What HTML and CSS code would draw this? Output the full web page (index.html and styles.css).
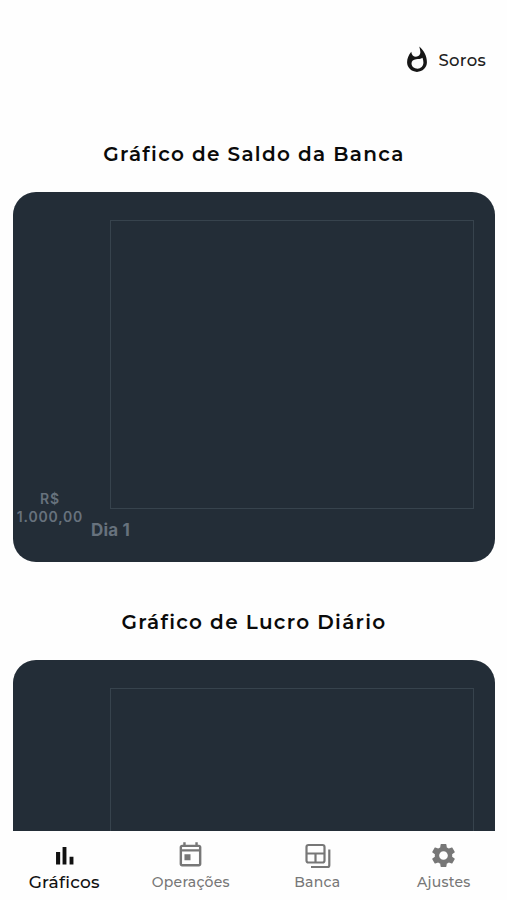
FILE: index.html
```html
<!DOCTYPE html>
<html lang="pt-BR">
<head>
    <meta charset="UTF-8">
    <meta name="viewport" content="width=device-width, initial-scale=1.0">
    <title>Gráficos</title>
    <link rel="stylesheet" href="styles.css">
</head>
<body>
    <main class="content">
        <header class="topbar">
            <button type="button" class="soros">
                <svg class="soros-icon" viewBox="0 0 24 24"><path fill-rule="evenodd" d="M13.9.4s1 2.9 1 5c0 2.1-1.6 3.8-3.8 3.8-2.1 0-3.9-1.7-4-4.3C4.700 7.700 3.500 10.800 3.500 14c0 4.500 3.800 8.200 8.500 8.200s8.500-3.700 8.500-8.200C20.500 8.600 17.900 3.700 13.900.4zM16.700 10c.5 1.500.8 2.900.8 4.200 0 3.100-2.200 5.200-5 5.200-2.900 0-5.200-1.900-5.200-4.400 0-2.200 1.600-3.400 3.900-3.700 2.100-.3 4-.1 5.500-1.300z"/></svg>
                <span class="soros-label">Soros</span>
            </button>
        </header>

        <h2 class="title">Gráfico de Saldo da Banca</h2>
        <section class="chart">
            <div class="y-axis"><span>R$</span><span>1.000,00</span></div>
            <div class="plot"></div>
            <div class="x-axis"><span>Dia 1</span></div>
        </section>

        <h2 class="title">Gráfico de Lucro Diário</h2>
        <section class="chart">
            <div class="y-axis"></div>
            <div class="plot"></div>
            <div class="x-axis"></div>
        </section>
    </main>

    <nav class="tabs">
        <a class="tab active">
            <svg viewBox="0 0 24 24"><path d="M5 9.2h3.400V19.400H5zM10.400 5h3.200v14.400h-3.200zM16.200 13h3.200v6.400h-3.200z"/></svg>
            <span>Gráficos</span>
        </a>
        <a class="tab">
            <svg viewBox="0 0 24 24"><path d="M19 3h-1V1h-2v2H8V1H6v2H5c-1.11 0-1.99.9-1.99 2L3 19c0 1.1.89 2 2 2h14c1.1 0 2-.9 2-2V5c0-1.1-.9-2-2-2zm0 16H5V8.6h14V19zM5 6.8V5h14v1.8H5zM7 11h5v5H7z"/></svg>
            <span>Operações</span>
        </a>
        <a class="tab">
            <svg class="outline" viewBox="0 0 29 29"><rect x="3.5" y="4" width="18" height="17.500" rx="2"/><path d="M3.5 12.5h18M12.500 12.5V21.500M26.300 8.500v15.7q0 1.800-1.800 1.800H8"/></svg>
            <span>Banca</span>
        </a>
        <a class="tab">
            <svg viewBox="0 0 24 24"><path d="M19.14 12.94c.04-.3.06-.61.06-.94 0-.32-.02-.64-.07-.94l2.03-1.58c.18-.14.23-.41.12-.61l-1.92-3.32c-.12-.22-.37-.29-.59-.22l-2.39.96c-.5-.38-1.03-.7-1.62-.94l-.36-2.54c-.04-.24-.24-.41-.48-.41h-3.84c-.24 0-.43.17-.47.41l-.36 2.54c-.59.24-1.13.57-1.62.94l-2.39-.96c-.22-.08-.47 0-.59.22L2.74 8.87c-.12.21-.08.47.12.61l2.03 1.58c-.05.3-.09.63-.09.94s.02.64.07.94l-2.03 1.58c-.18.14-.23.41-.12.61l1.92 3.32c.12.22.37.29.59.22l2.39-.96c.5.38 1.03.7 1.62.94l.36 2.54c.05.24.24.41.48.41h3.84c.24 0 .44-.17.47-.41l.36-2.54c.59-.24 1.13-.56 1.62-.94l2.39.96c.22.08.47 0 .59-.22l1.92-3.32c.12-.22.07-.47-.12-.61l-2.01-1.58zM12 15.6c-1.98 0-3.6-1.62-3.6-3.6s1.62-3.6 3.6-3.6 3.6 1.62 3.6 3.6-1.62 3.6-3.6 3.6z"/></svg>
            <span>Ajustes</span>
        </a>
    </nav>
</body>
</html>
```

FILE: styles.css
```css
* {
    box-sizing: border-box;
}
body {
    margin: 0;
    height: 100vh;
    display: flex;
    flex-direction: column;
    overflow: hidden;
    background: #fefefe;
    font-family: 'Montserrat', 'Inter', sans-serif;
}
.content {
    flex: 1;
    min-height: 0;
    overflow: hidden;
    padding: 0 12px 0 13px;
}
.topbar {
    height: 117px;
    padding: 43px 9px 0 0;
    display: flex;
    justify-content: flex-end;
    align-items: flex-start;
}
.soros {
    display: flex;
    align-items: center;
    gap: 7px;
    height: 34px;
    padding: 0;
    border: none;
    background: none;
    color: #202020;
    font-family: inherit;
    font-size: 16.5px;
    font-weight: 500;
    white-space: nowrap;
}
.soros-icon {
    width: 28px;
    height: 28px;
    fill: #161616;
}
.soros-label {
    letter-spacing: 0.3px;
}
.title {
    height: 75px;
    margin: 0;
    color: #0a0a0a;
    font-size: 20px;
    font-weight: 600;
    line-height: 75px;
    letter-spacing: 1.3px;
    text-align: center;
    white-space: nowrap;
}
.chart {
    height: 370px;
    margin-bottom: 23px;
    padding: 28px 21px 0 0;
    display: grid;
    grid-template-columns: 97px 1fr;
    grid-template-rows: 289px 1fr;
    border-radius: 23px;
    background: #232d37;
    color: #67727d;
    font-family: 'Inter', sans-serif;
    font-weight: 700;
}
.y-axis {
    display: flex;
    flex-direction: column;
    justify-content: flex-end;
    align-items: center;
    padding-right: 23px;
    margin-bottom: -17px;
    font-size: 14px;
    font-weight: 600;
    line-height: 18px;
    white-space: nowrap;
    letter-spacing: 0.8px;
}
.plot {
    border: 1px solid #37434d;
}
.x-axis {
    grid-column: 1 / 3;
    padding: 11px 0 0 78px;
    font-size: 17px;
    line-height: 20px;
    letter-spacing: 0.2px;
}
.tabs {
    height: 69px;
    padding: 10px 0 0 1px;
    display: flex;
    background: #fefefe;
}
.tab {
    flex: 1;
    display: flex;
    flex-direction: column;
    align-items: center;
    gap: 2px;
    color: #777;
    font-size: 14px;
    font-weight: 500;
    line-height: 20px;
    letter-spacing: 0.25px;
}
.tab svg {
    width: 29px;
    height: 29px;
    fill: currentColor;
}
.tab .outline {
    fill: none;
    stroke: currentColor;
    stroke-width: 2.2;
}
.tab.active {
    color: #111;
    font-size: 17px;
}
```
